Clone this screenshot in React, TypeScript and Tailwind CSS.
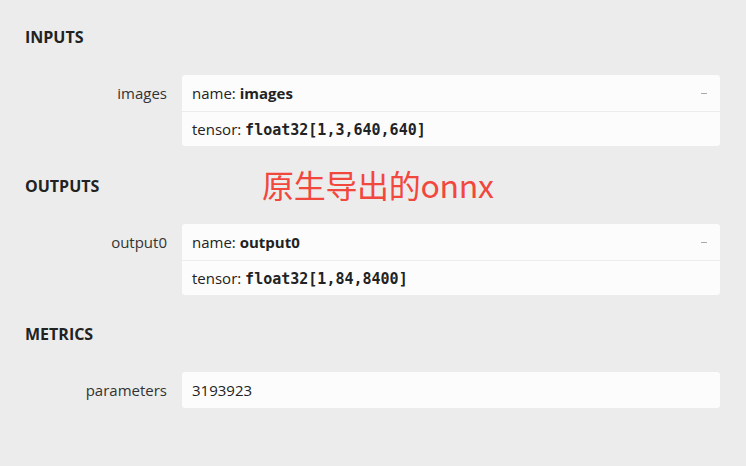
import React from 'react';

const sans = "font-['Open_Sans','Noto_Sans',sans-serif]";
const mono = "font-['DejaVu_Sans_Mono','Liberation_Mono',monospace]";

type Row = { label: string; lines: React.ReactNode[]; toggle?: boolean };

const Section: React.FC<{ title: string; rows: Row[] }> = ({ title, rows }) => (
  <div>
    <div className="h-5 pl-[25px] text-[16px] font-bold leading-5 text-[#222]">{title}</div>
    <div className="mt-7">
      {rows.map((row) => (
        <div key={row.label} className="flex pr-[26px]">
          <div className="w-[167px] shrink-0 text-right text-[15px] leading-[36px] text-[#333]">{row.label}</div>
          <div className="ml-[15px] flex-1 rounded-[3px] bg-[#fcfcfc]">
            {row.lines.map((line, i) => (
              <div
                key={i}
                className={`relative px-[10px] text-[15px] text-[#222] ${
                  i > 0 ? 'h-[35px] border-t border-[#ececec] leading-[34px]' : 'h-[36px] leading-[36px]'
                }`}
              >
                {line}
                {row.toggle && i === 0 && (
                  <span className="absolute right-[13px] top-[18px] h-px w-[6px] bg-[#aaa]" />
                )}
              </div>
            ))}
          </div>
        </div>
      ))}
    </div>
  </div>
);

export default function App() {
  return (
    <div className={`relative h-[466px] w-[746px] overflow-hidden bg-[#ececec] pt-[27px] ${sans}`}>
      <Section
        title="INPUTS"
        rows={[
          {
            label: 'images',
            toggle: true,
            lines: [
              <>name: <b>images</b></>,
              <>tensor: <b className={mono}>float32[1,3,640,640]</b></>,
            ],
          },
        ]}
      />
      <div className="h-[30px]" />
      <Section
        title="OUTPUTS"
        rows={[
          {
            label: 'output0',
            toggle: true,
            lines: [
              <>name: <b>output0</b></>,
              <>tensor: <b className={mono}>float32[1,84,8400]</b></>,
            ],
          },
        ]}
      />
      <div className="h-[29px]" />
      <Section title="METRICS" rows={[{ label: 'parameters', lines: ['3193923'] }]} />

      <div className="absolute left-[262px] top-[164px] font-['Noto_Sans_CJK_SC','Noto_Sans',sans-serif] text-[32px] leading-10 tracking-[-0.3px] text-[#f2473c]">
        原生导出的onnx
      </div>
    </div>
  );
}
